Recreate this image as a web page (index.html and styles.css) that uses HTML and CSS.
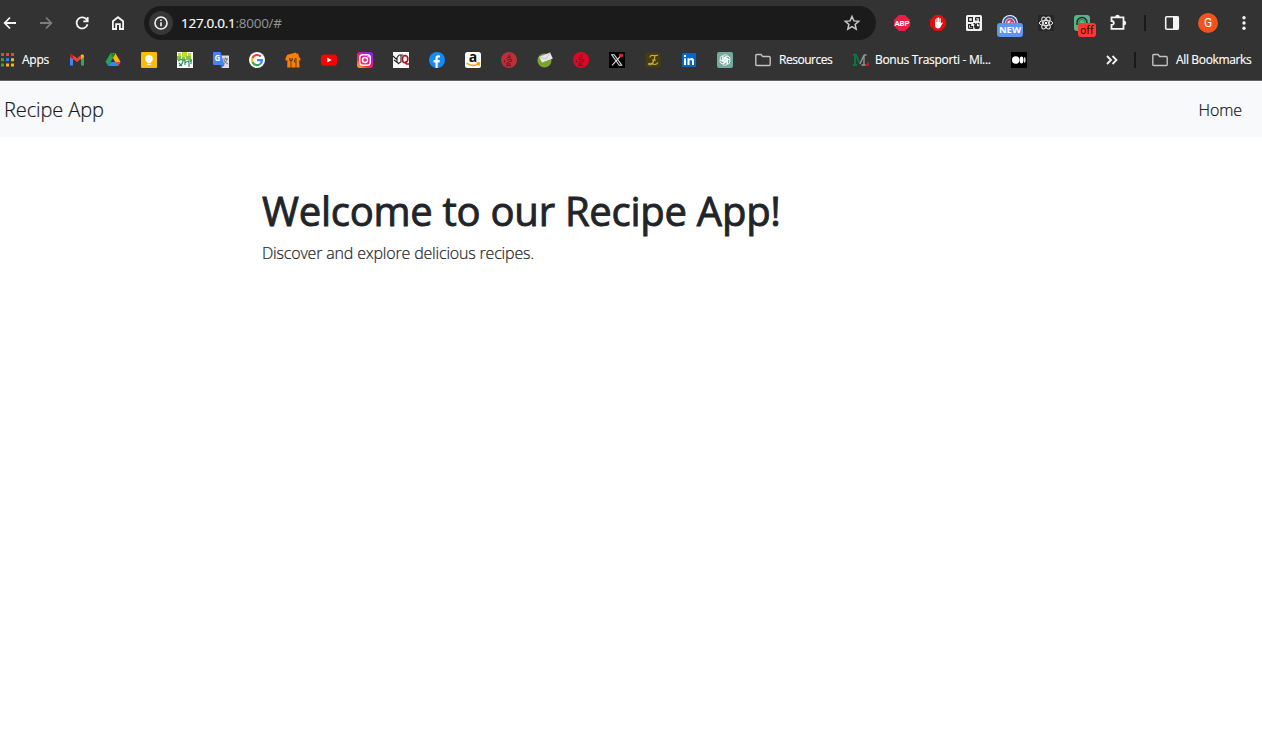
FILE: index.html
```
<!DOCTYPE html>
<html lang="en">
<head>
<meta charset="utf-8">
<title>Recipe App</title>
<link rel="stylesheet" href="styles.css">
</head>
<body>
<header class="browser">
  <div class="toolbar">
    <svg class="icon stroke" viewBox="0 0 16 16"><path d="M14 8H3M8 2.500 2.700 8 8 13.500"/></svg>
    <svg class="icon stroke dim" viewBox="0 0 16 16"><path d="M2 8h11M8 2.500 13.300 8 8 13.500"/></svg>
    <svg class="icon stroke" viewBox="0 0 16 16"><path d="M13 5.300A5.500 5.500 0 1 0 13.500 9.200M13.700 2v4.300H9.300"/></svg>
    <svg class="icon stroke" viewBox="0 0 16 16"><path d="M2.900 14V6.200L8 2.200l5.100 4V14H9.900V9.200H6.100V14z"/></svg>
    <div class="address">
      <span class="info"><svg class="icon stroke" viewBox="0 0 16 16"><circle cx="8" cy="8" r="6"/><path d="M8 7.300v4M8 4.500v1.600"/></svg></span>
      <span class="url"><b>127.0.0.1</b>:8000/#</span>
      <svg class="icon star" viewBox="0 0 16 16"><path d="m8 1.500 1.900 4.400 4.800.4-3.600 3.200 1.100 4.700L8 11.700l-4.200 2.500 1.100-4.700L1.300 6.300l4.800-.4z"/></svg>
    </div>
    <div class="extensions">
      <svg class="icon" viewBox="0 0 16 16"><path fill="#ed1e45" d="M5 0h6l5 5v6l-5 5H5l-5-5V5z"/><text class="abp" x="8" y="10.900" text-anchor="middle">ABP</text></svg>
      <svg class="icon" viewBox="0 0 16 16"><path fill="#e40d0d" d="M5 0h6l5 5v6l-5 5H5l-5-5V5z"/><path fill="#fff" d="M5 4.500q.7-.6 1.100 0V7h.4V3q.7-.7 1.200 0v4H8V2.600q.7-.6 1.200 0V7h.4V3.500q.7-.6 1.200 0v5l1.300-1.200q.8 0 .6.800L10.500 12q-1 1.800-3 1.500Q5 13 5 10z"/></svg>
      <svg class="icon" viewBox="0 0 16 16"><rect width="16" height="16" rx="1.500" fill="#f1f1f1"/><path fill="none" stroke="#292929" stroke-width="1.200" d="M2.600 2.600h3.800v3.800H2.600zM9.600 2.600h3.800v3.800M9.600 2.600v2.200h1.800M2.600 13.400V9.600h2v2h2v1.800h-4M7.500 8.600H9M11 8.600h2.500"/><circle cx="11" cy="11.200" r="2.900" fill="#292929"/><path d="M11 11.200V8l3.200 3.200z" fill="#f1f1f1"/></svg>
      <span class="badged"><svg class="icon" viewBox="0 0 16 16"><circle cx="8" cy="8" r="8" fill="#f7f7fa"/><path fill="none" stroke="#3558a8" stroke-width="1.800" d="M2 8a6 6 0 0 1 12 0"/><path fill="none" stroke="#d73d55" stroke-width="1.800" d="M4.500 8a3.500 3.500 0 0 1 7 0M8 8l2.500-3"/></svg><em class="badge new">NEW</em></span>
      <svg class="icon" viewBox="0 0 16 16"><rect width="16" height="16" fill="#262626"/><g fill="none" stroke="#e8e8e8" stroke-width="1"><ellipse cx="8" cy="8" rx="6.700" ry="2.600"/><ellipse cx="8" cy="8" rx="6.700" ry="2.600" transform="rotate(60 8 8)"/><ellipse cx="8" cy="8" rx="6.700" ry="2.600" transform="rotate(120 8 8)"/></g><circle cx="8" cy="8" r="1.200" fill="#fff"/></svg>
      <span class="badged"><svg class="icon" viewBox="0 0 16 16"><rect width="16" height="16" rx="3" fill="#53b684"/><path fill="none" stroke="#202b26" stroke-width="1.400" d="M3 10V7.500a5 5 0 0 1 10 0V10"/><path fill="none" stroke="#347d58" d="M5 10V7.500a3 3 0 0 1 6 0"/></svg><em class="badge off">off</em></span>
      <svg class="icon stroke" viewBox="0 0 16 16"><path d="M1.500 2.300h12v11.500h-12V10c3.100.1 3.100-4 0-4z"/><path fill="#f4f4f4" stroke="none" d="M5.200 2a2.300 2.300 0 0 1 4.600 0zM14 5.800a2.200 2.200 0 0 1 0 4.400z"/></svg>
    </div>
    <i class="divider"></i>
    <svg class="icon" viewBox="0 0 16 16"><rect x="1.700" y="1.700" width="12.600" height="12.600" rx="1" fill="none" stroke="#f4f4f4" stroke-width="1.600"/><path fill="#f4f4f4" d="M9 1.500h5.500v13H9z"/></svg>
    <span class="avatar">G</span>
    <svg class="icon" viewBox="0 0 16 16"><g fill="#f4f4f4"><circle cx="8" cy="2.700" r="1.700"/><circle cx="8" cy="8" r="1.700"/><circle cx="8" cy="13.300" r="1.700"/></g></svg>
  </div>

  <nav class="bookmarks">
    <a class="bookmark apps"><svg class="icon" viewBox="0 0 16 16"><path fill="#ef4136" d="M1 1h3v3H1zM6 1h3v3H6zM11 1h3v3h-3z"/><path fill="#36a553" d="M1 6.200h3v3H1zM1 11.500h3v3H1z"/><path fill="#218bf0" d="M6 6.200h3v3H6z"/><path fill="#f7b51b" d="M11 6.200h3v3h-3zM6 11.500h3v3H6zM11 11.500h3v3h-3z"/></svg><span>Apps</span></a>
    <div class="favicons">
      <svg class="icon" viewBox="0 0 16 16"><path fill="#4285f4" d="M1 4v9.500h3V6z"/><path fill="#34a853" d="M15 4v9.500h-3V6z"/><path fill="#ea4335" d="M1 4c0-1.500 1.500-2 2.700-1L8 6.300 12 3v4L8 10 1 5z"/><path fill="#fbbc04" d="M12 3c1.300-1 3-.4 3 1.200V5l-3 2.200z"/><path fill="#c5221f" d="M1 4c0-1.500 1.500-2 3-.8v4L1 5z"/></svg>
      <svg class="icon" viewBox="0 0 16 16"><path fill="#24a456" d="M5.400 1.500 8 6 3.300 14 .5 9.800z"/><path fill="#ffba00" d="M5.400 1.500h5.200l4.900 8.400h-5.200z"/><path fill="#3983f2" d="M5.700 10h9.800l-2.400 4H3.200z"/><path fill="#ea4335" d="M10.400 10h5.100l-2.200 3.700z"/><path fill="#188038" d="M5.400 1.500h5.200L8 6z"/></svg>
      <svg class="icon" viewBox="0 0 16 16"><rect width="16" height="16" rx="1.200" fill="#fbbc04"/><circle cx="8" cy="6.800" r="3.800" fill="#fff"/><path fill="#fff" d="M6.200 9h3.600v2H6.200zM6.200 11.700h3.600V13H6.200z"/></svg>
      <svg class="icon" viewBox="0 0 16 16"><path fill="#fafafa" d="M0 0h16v16H0z"/><path fill="#c5db35" d="M1 1h3v3H1zM5 0h5v5H5zM11 1h3v5h-3z"/><path fill="#83c443" d="M0 4h4v4H0zM5 5h3v4H5zM9 4h5v4H9z"/><path fill="none" stroke="#22845b" stroke-width="1.100" d="M1 9q5-3 5 0T2 14M8 7v6m0-2q3-3 4 0v4M11 9h4M14 7v5M2 11l3 3"/></svg>
      <svg class="icon" viewBox="0 0 16 16"><path fill="#dedede" d="M6 3.500h10V16H8.500z"/><path fill="#4285f4" d="M1 0h6.500l4 13H1.500Q0 13 0 11.500V1Q0 0 1 0z"/><path fill="#3367d6" d="m7.500 13 1 3 3-3z"/><text class="translate-g" x="1.500" y="9.300">G</text><path fill="none" stroke="#667279" d="M10 7h5M12.500 5.500V7M14 7q-1 4-3.500 5M11 8q1 3 4 4"/></svg>
      <svg class="icon" viewBox="0 0 16 16"><circle cx="8" cy="8" r="8" fill="#fff"/><g fill="none" stroke-width="2.100"><path stroke="#ea4335" d="M3.500 6A5 5 0 0 1 11.700 4.500"/><path stroke="#fbbc04" d="M3.500 6a5 5 0 0 0 0 4"/><path stroke="#34a853" d="M3.500 10a5 5 0 0 0 7.700 2"/><path stroke="#4285f4" d="M8 8.100h5a5 5 0 0 1-1.800 3.900"/></g></svg>
      <svg class="icon" viewBox="0 0 16 16"><path fill="#ff8000" d="m.3 6.700 2-4L11 .5l.5 1.300h2l.2 2.500 2 3-.6 1.200-1-.1.500 7.200H2.200l.2-7.200-1.700.1z"/><path fill="none" stroke="#333" stroke-width=".8" d="M4.700 6v2.500h2.600V6M6 6v10M11 6v10M11 6q-2 1-1.500 4H11"/></svg>
      <svg class="icon" viewBox="0 0 16 16"><rect y="2.400" width="16" height="11.300" rx="3" fill="#f00"/><path fill="#fff" d="m6.200 5.500 4.500 2.500-4.500 2.500z"/></svg>
      <svg class="icon" viewBox="0 0 16 16"><defs><linearGradient id="insta" x1="0" y1="1" x2=".8" y2="0"><stop stop-color="#ffc529"/><stop offset=".35" stop-color="#ff2d3d"/><stop offset=".7" stop-color="#e00ac0"/><stop offset="1" stop-color="#8a22ff"/></linearGradient></defs><rect width="16" height="16" rx="3" fill="url(#insta)"/><g fill="none" stroke="#fff" stroke-width="1.400"><rect x="2.700" y="2.700" width="10.600" height="10.600" rx="3"/><circle cx="8" cy="8" r="2.500"/></g><circle cx="11.200" cy="4.800" r=".8" fill="#fff"/></svg>
      <svg class="icon" viewBox="0 0 16 16"><path fill="#fafafa" d="M0 0h16v16H0z"/><path fill="none" stroke="#222" stroke-width="1.100" d="m0 4 3 3 3-4M1 8l4 3M4 5v5l2 2M6 3h4M8 3v7l-2 1"/><path fill="none" stroke="#a91420" stroke-width="1.600" d="M12 3.500q-2.500 0-2.500 3.700t2.500 3.500 2.800-3.500-2.800-3.700zM12 9.500l1.500 2.500H16"/></svg>
      <svg class="icon" viewBox="0 0 16 16"><circle cx="8" cy="8" r="8" fill="#168af7"/><path fill="#fff" d="M6.500 16v-5.500h-2V8h2V6.200q0-3 2.700-3l1.700.2v2.100H9.700q-1 0-1 1V8h2.200l-.4 2.500H8.700V16z"/></svg>
      <svg class="icon" viewBox="0 0 16 16"><rect width="16" height="16" rx="2.500" fill="#fff"/><text class="amazon-a" x="8" y="10" text-anchor="middle">a</text><path fill="none" stroke="#ff9900" stroke-width="1.500" d="M1.500 11q6 4.500 12 .8M11.500 11h3l-.8 2.700"/></svg>
      <svg class="icon" viewBox="0 0 16 16"><circle cx="8" cy="8" r="8" fill="#bd3036"/><path class="crest" d="m9.500 2.500-2 1.500 2 1-4 1M6 8l4-1 1 2-4 1-2 2h5M5 13.500l5 .2M4 8l-1 3"/></svg>
      <svg class="icon" viewBox="0 0 16 16"><circle cx="7.500" cy="8.500" r="7" fill="#79a52c"/><path fill="#e8e8e8" d="m2 5 11-4.500 2.800 6L5 10.500z"/><path fill="none" stroke="#b5b5b5" stroke-width=".7" d="m2 5 7 2 4-6.500"/></svg>
      <svg class="icon" viewBox="0 0 16 16"><circle cx="8" cy="8" r="8" fill="#db0927"/><path class="crest" d="m9.500 2.500-2 1.500 2 1-4 1M6 8l4-1 1 2-4 1-2 2h5M5 13.500l5 .2M4 8l-1 3"/></svg>
      <svg class="icon" viewBox="0 0 16 16"><path d="M0 0h16v16H0z"/><path fill="none" stroke="#ddd" stroke-width="1.100" d="M2.700 2.800h2.500l7.500 10.500h-2.500zM12.700 2.800 3 13.300"/><circle cx="12" cy="3.500" r="2" fill="#f12425"/></svg>
      <svg class="icon" viewBox="0 0 16 16"><rect x=".5" y=".5" width="15" height="15" rx="3" fill="#463d11"/><path fill="none" stroke="#c9ad42" stroke-width="1.200" d="M5 5.500q0-2.500 3-2t5-.5M10 4q-.5 5-3 8-2 1.500-3.500 0 1.500-1.500 4.500 0t5-1.500M7 8h4"/></svg>
      <svg class="icon" viewBox="0 0 16 16"><rect x="1" y="1" width="14" height="14" rx="1" fill="#0a66c2"/><path fill="#fff" d="M3 6.300h2V13H3zM3 3h2v2H3zM6.500 6.300h2v1q1-1.200 2.200-1.200Q13 6.100 13 9v4h-2V9.300q0-1.400-1.200-1.400T8.500 9.300V13h-2z"/></svg>
      <svg class="icon" viewBox="0 0 16 16"><rect width="16" height="16" rx="2" fill="#74aa9c"/><g fill="none" stroke="#fff" stroke-width=".8"><path id="petal" d="M5.500 9.500V5.300A2.700 2.700 0 0 1 10.500 4L7 6.200v3.600"/><use href="#petal" transform="rotate(60 8 8)"/><use href="#petal" transform="rotate(120 8 8)"/><use href="#petal" transform="rotate(180 8 8)"/><use href="#petal" transform="rotate(240 8 8)"/><use href="#petal" transform="rotate(300 8 8)"/></g></svg>
    </div>
    <a class="bookmark resources"><svg class="icon folder" viewBox="0 0 16 16"><path d="M1.800 2.500H6l1.700 2h6.500q1 0 1 1v7q0 1-1 1H1.800q-1 0-1-1v-9q0-1 1-1z"/></svg><span>Resources</span></a>
    <a class="bookmark bonus"><svg class="icon" viewBox="0 0 16 16"><path fill="none" stroke="#087a40" stroke-width="1.800" d="M0 2.700h3.500M2 3v10M0 13h4M3 3l3.500 8"/><path fill="none" stroke="#999" stroke-width="1.300" d="m7 12 4-9v10M11 3h2.500M8.500 13h4"/><path fill="none" stroke="#d01c22" stroke-width="1.700" d="M12.500 13.200H15v-3"/></svg><span>Bonus Trasporti - Mi...</span></a>
    <svg class="icon medium" viewBox="0 0 16 16"><rect width="16" height="16" rx="1"/><circle cx="4.700" cy="8" r="3.700" fill="#fff"/><ellipse cx="10.500" cy="8" rx="1.900" ry="3.400" fill="#fff"/><ellipse cx="13.700" cy="8" rx=".9" ry="3" fill="#ddd"/></svg>
    <svg class="icon stroke overflow" viewBox="0 0 16 16"><path d="m3 4 4 4-4 4M8.500 4l4 4-4 4"/></svg>
    <i class="divider"></i>
    <a class="bookmark all"><svg class="icon folder" viewBox="0 0 16 16"><path d="M1.800 2.500H6l1.700 2h6.500q1 0 1 1v7q0 1-1 1H1.800q-1 0-1-1v-9q0-1 1-1z"/></svg><span>All Bookmarks</span></a>
  </nav>
</header>
<nav class="navbar"><a class="brand">Recipe App</a><a class="home">Home</a></nav>
<main class="content">
  <h1>Welcome to our Recipe App!</h1>
  <p>Discover and explore delicious recipes.</p>
</main>
</body>
</html>
```
FILE: styles.css
```
* { box-sizing: border-box; }
body { margin: 0; background: #fff; color: #212529; font-family: "Open Sans", "Noto Sans", sans-serif; overflow: hidden; }
.browser { height: 81px; background: #333; border-bottom: 1px solid #646464; color: #fff; }
.icon { width: 16px; height: 16px; flex: none; display: block; overflow: visible; }
.stroke { fill: none; stroke: #f4f4f4; stroke-width: 1.8; }
.dim { stroke: #7d7d7d; }
.toolbar { display: flex; align-items: center; height: 46px; gap: 20px; padding: 0 10px 0 2px; }
.address { display: flex; align-items: center; width: 732px; height: 34px; margin-left: -2px; margin-right: -2px; padding: 0 16px 0 5px; border-radius: 17px; background: #1b1b1b; flex: none; }
.info { display: grid; place-items: center; width: 24px; height: 24px; border-radius: 50%; background: #373737; }
.info .icon { stroke-width: 1.6; }
.url { flex: 1; padding-left: 8px; font-size: 13.5px; line-height: 20px; letter-spacing: -.27px; color: #969696; }
.url b { font-weight: 400; color: #fff; -webkit-text-stroke: .2px #fff; }
.star { fill: none; stroke: #c7c7c7; stroke-width: 1.5; }
.extensions { display: flex; gap: 20px; }
.badged { position: relative; width: 16px; height: 16px; }
.badge { position: absolute; display: grid; place-items: center; border-radius: 3px; font-style: normal; }
.new { left: -5px; top: 8px; width: 26px; height: 14px; background: #5a97ee; color: #fff; font-size: 9.5px; font-weight: 700; line-height: 14px; }
.off { left: 4px; top: 8px; width: 18px; height: 14px; background: #ff382f; color: #241010; font: 10.5px/13px Roboto, sans-serif; }
.abp { font: 700 7.8px Roboto, sans-serif; fill: #fff; }
.divider { width: 2px; height: 16px; background: #191919; flex: none; }
.toolbar .divider { margin-left: -2px; margin-right: -2px; }
.avatar { display: grid; place-items: center; width: 20px; height: 20px; margin: 0 -2px; border-radius: 50%; background: #f4511e; color: #fff; font: 12px/20px Roboto, sans-serif; flex: none; }
.bookmarks { display: flex; align-items: center; height: 28px; font-size: 12px; line-height: 18px; -webkit-text-stroke: .15px #fff; }
.bookmarks svg { -webkit-text-stroke: 0; }
.bookmark { display: flex; align-items: center; gap: 8px; white-space: nowrap; }
.apps { width: 49px; gap: 6px; }
.apps span { letter-spacing: -.25px; }
.favicons { display: flex; gap: 20px; margin-left: 20px; }
.translate-g { font: 700 8px "Open Sans", sans-serif; fill: #fff; }
.amazon-a { font: 700 14px "Open Sans", sans-serif; fill: #111; }
.crest { fill: none; stroke: #651d25; stroke-width: 1; }
.folder { fill: none; stroke: #c2c2c2; stroke-width: 1.4; }
.resources { width: 78px; margin-left: 22px; letter-spacing: -.48px; }
.bonus { width: 138px; margin-left: 20px; gap: 6px; letter-spacing: -.3px; }
.medium { margin-left: 20px; }
.overflow { margin-left: 77px; }
.bookmarks .divider { margin-left: 14px; }
.all { margin-left: 16px; letter-spacing: -.35px; }
.navbar { display: flex; align-items: center; justify-content: space-between; height: 56px; padding: 0 20px 0 4px; background: #f8f9fb; }
.brand { font-size: 20px; line-height: 30px; font-weight: 300; padding-top: 2px; letter-spacing: -.1px; color: #17191c; -webkit-text-stroke: .2px #17191c; }
.home { font-size: 16px; line-height: 24px; font-weight: 300; padding-top: 1px; letter-spacing: -.1px; color: #101214; -webkit-text-stroke: .2px #101214; }
.content { padding: 50px 0 0 262px; }
h1 { margin: 0 0 6px; font-size: 40px; line-height: 48px; font-weight: 400; letter-spacing: -.25px; -webkit-text-stroke: .9px #212529; white-space: nowrap; }
p { margin: 0; font-size: 16px; line-height: 24px; font-weight: 300; letter-spacing: -.18px; -webkit-text-stroke: .2px #212529; }
```
